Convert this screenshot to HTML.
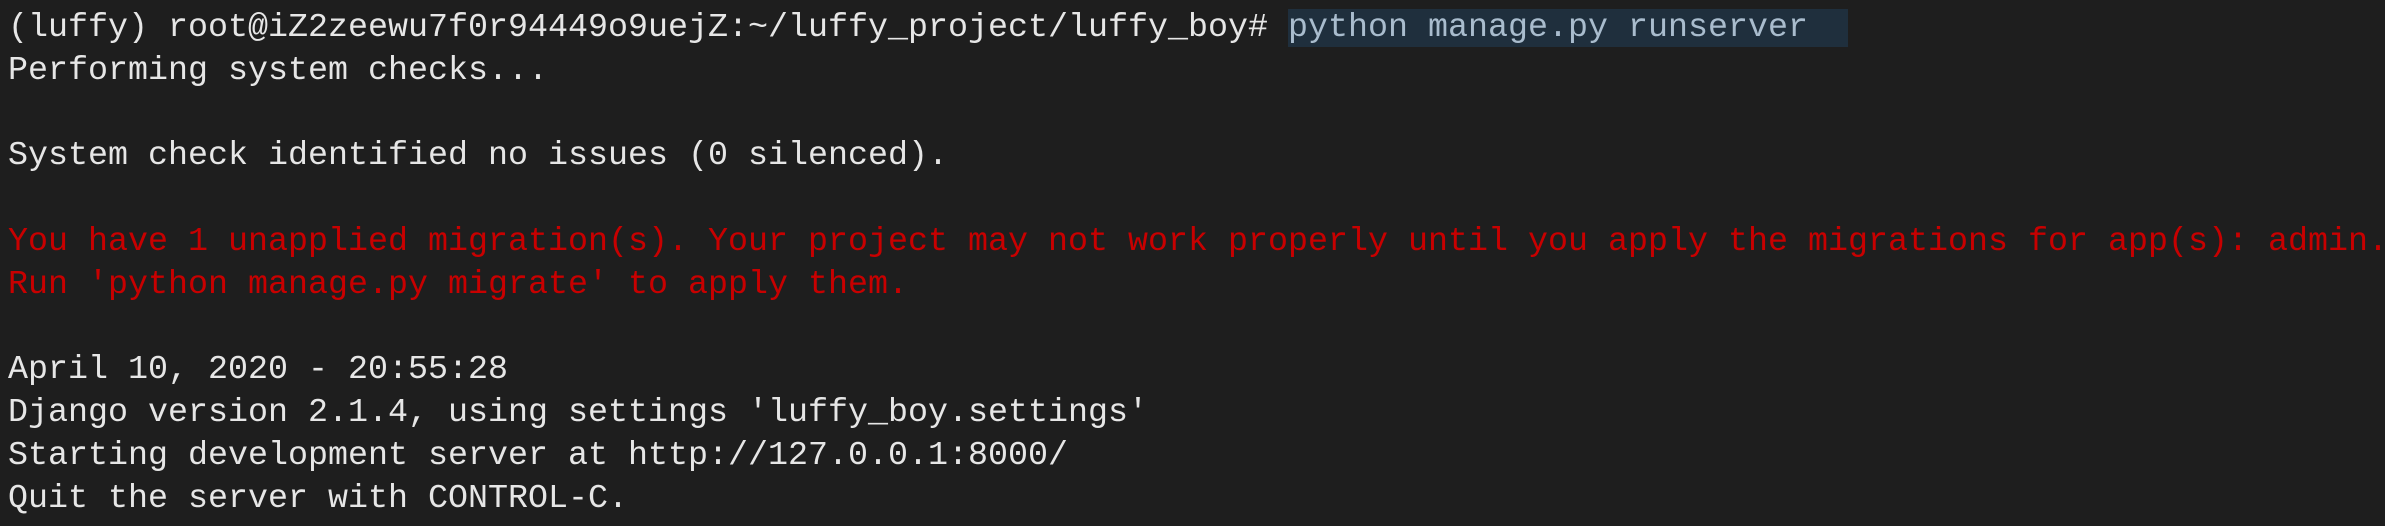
<!DOCTYPE html>
<html><head><meta charset="utf-8"><style>
html,body{margin:0;padding:0;background:#1e1e1e;width:2385px;height:526px;overflow:hidden}
.t{position:absolute;left:8px;top:-36px;font-family:"Liberation Mono",monospace;font-size:33.33px;line-height:42.8px;color:#e6e6e6;white-space:pre}
.r{color:#c80000}
.h{background:#1f2f3d;color:#a9bccd}
</style></head><body>
<div class="t">(luffy) root@iZ2zeewu7f0r94449o9uejZ:~/luffy_project/luffy_boy# cd ..
(luffy) root@iZ2zeewu7f0r94449o9uejZ:~/luffy_project/luffy_boy# <span class="h">python manage.py runserver  </span>
Performing system checks...

System check identified no issues (0 silenced).

<span class="r">You have 1 unapplied migration(s). Your project may not work properly until you apply the migrations for app(s): admin.</span>
<span class="r">Run 'python manage.py migrate' to apply them.</span>

April 10, 2020 - 20:55:28
Django version 2.1.4, using settings 'luffy_boy.settings'
Starting development server at http://127.0.0.1:8000/
Quit the server with CONTROL-C.</div>
</body></html>
